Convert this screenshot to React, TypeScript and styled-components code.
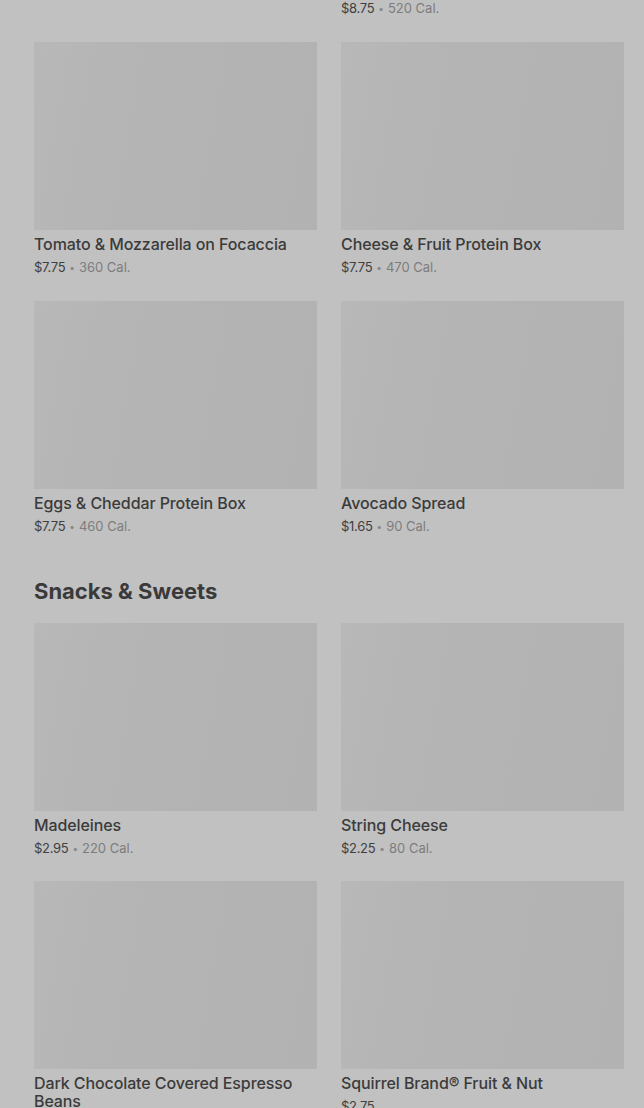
import React from 'react';
import styled, { createGlobalStyle } from 'styled-components';

type Item = { name: string; price: string; cal?: string };

const firstRow: Item[] = [
  { name: 'Tomato & Mozzarella on Focaccia', price: '$7.75', cal: '360 Cal.' },
  { name: 'Cheese & Fruit Protein Box', price: '$7.75', cal: '470 Cal.' },
  { name: 'Eggs & Cheddar Protein Box', price: '$7.75', cal: '460 Cal.' },
  { name: 'Avocado Spread', price: '$1.65', cal: '90 Cal.' },
];

const snacks: Item[] = [
  { name: 'Madeleines', price: '$2.95', cal: '220 Cal.' },
  { name: 'String Cheese', price: '$2.25', cal: '80 Cal.' },
  { name: 'Dark Chocolate Covered Espresso Beans', price: '$2.75' },
  { name: 'Squirrel Brand® Fruit & Nut', price: '$2.75' },
];

const GlobalStyle = createGlobalStyle`
  html, body {
    margin: 0;
    padding: 0;
    background: #c1c1c1;
    overflow: hidden;
  }
  body {
    font-family: Inter, "Noto Sans", Arial, sans-serif;
    -webkit-font-smoothing: antialiased;
  }
`;

const PriceLine = ({ price, cal, $top = 5 }: { price: string; cal?: string; $top?: number }) => (
  <S.Meta $top={$top}>
    <S.Price>{price}</S.Price>
    {cal && (
      <>
        <S.Dot>•</S.Dot>
        <S.Cal>{cal}</S.Cal>
      </>
    )}
  </S.Meta>
);

const MenuItem = ({ item }: { item: Item }) => (
  <S.Card>
    <S.Photo />
    <S.Name>{item.name}</S.Name>
    <PriceLine price={item.price} cal={item.cal} />
  </S.Card>
);

const App = () => {
  return (
    <>
      <GlobalStyle />
      <S.Page>
        <S.Grid $gap={25}>
          <div />
          <PriceLine price="$8.75" cal="520 Cal." $top={-1} />
          {firstRow.map((item) => (
            <MenuItem key={item.name} item={item} />
          ))}
        </S.Grid>
        <S.Section>
          <S.Heading>Snacks &amp; Sweets</S.Heading>
          <S.Grid $gap={24}>
            {snacks.map((item) => (
              <MenuItem key={item.name} item={item} />
            ))}
          </S.Grid>
        </S.Section>
      </S.Page>
    </>
  );
};

const S = {
  Page: styled.div`
    height: 1108px;
    overflow: hidden;
    padding: 0 20px 0 34px;
    box-sizing: border-box;
  `,
  Grid: styled.div<{ $gap: number }>`
    display: grid;
    grid-template-columns: 283px 283px;
    column-gap: 24px;
    row-gap: ${({ $gap }) => $gap}px;
  `,
  Card: styled.div`
    display: flex;
    flex-direction: column;
  `,
  Photo: styled.div`
    height: 188px;
    background: linear-gradient(100deg, #b8b8b8 0%, #b4b4b4 35%, #b2b2b2 100%);
  `,
  Name: styled.div`
    margin-top: 5px;
    font-size: 16px;
    line-height: 18px;
    font-weight: 500;
    color: #3b3b3b;
    letter-spacing: -0.1px;
  `,
  Meta: styled.div<{ $top: number }>`
    margin-top: ${({ $top }) => $top}px;
    font-size: 13px;
    line-height: 18px;
    display: flex;
    align-items: center;
  `,
  Price: styled.span`
    color: #404040;
    letter-spacing: -0.3px;
  `,
  Dot: styled.span`
    color: #888888;
    margin: 0 4px;
    font-size: 10px;
  `,
  Cal: styled.span`
    color: #7d7d7d;
  `,
  Section: styled.section`
    margin-top: 42px;
  `,
  Heading: styled.h2`
    margin: 0 0 18px;
    font-size: 22px;
    line-height: 28px;
    font-weight: 700;
    color: #3a3a3a;
    letter-spacing: 0;
  `,
};

export default App;
